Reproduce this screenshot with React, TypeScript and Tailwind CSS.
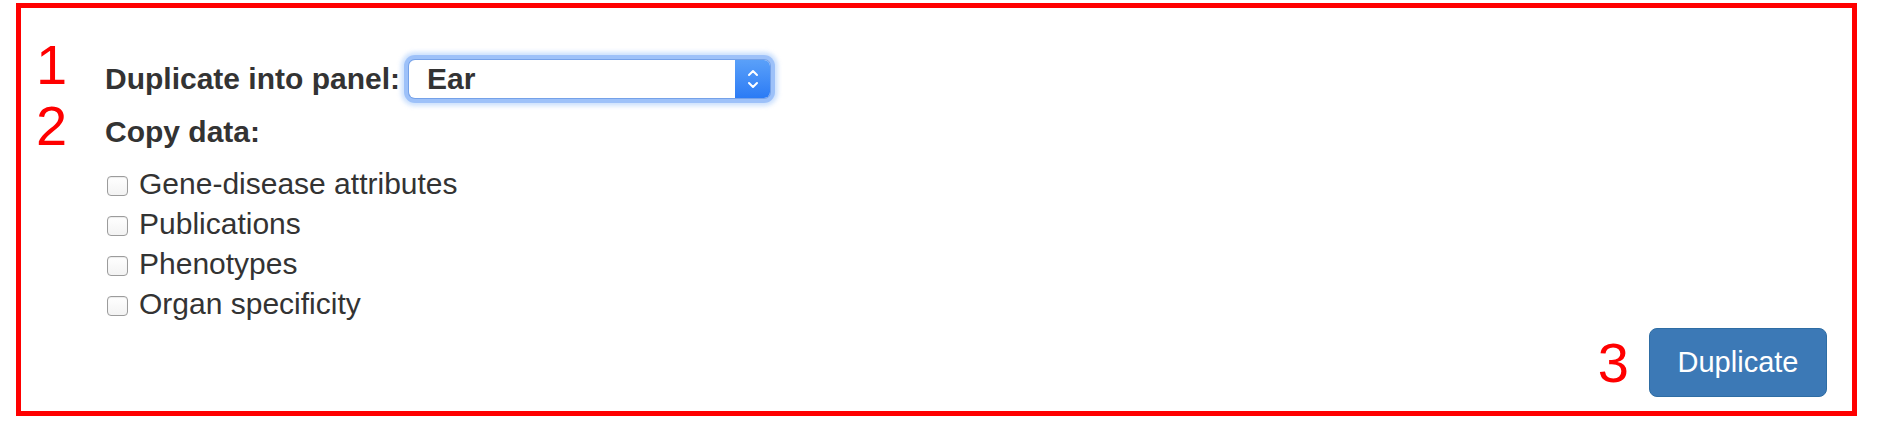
import React from "react";

const items = [
  "Gene-disease attributes",
  "Publications",
  "Phenotypes",
  "Organ specificity",
];

function Checkbox() {
  return (
    <span className="mt-[4px] inline-block w-[21px] h-[20px] shrink-0 rounded-[4px] border border-[#9c9c9c] bg-gradient-to-b from-white to-[#f3f3f3] shadow-[inset_0_1px_1px_rgba(0,0,0,0.08)]" />
  );
}

export default function App() {
  return (
    <div className="w-[1893px] h-[431px] bg-white pt-[3px] pl-[16px] font-['Liberation_Sans',Arial,sans-serif] text-[#333333]">
      <div className="relative w-[1841px] h-[413px] border-[5px] border-[#ff0000] flex flex-col pl-[84px] pr-[25px] pt-[52px]">
        <span className="absolute left-[15px] top-[29px] text-[56px] leading-[56px] text-[#ff0000]">1</span>
        <span className="absolute left-[15px] top-[90px] text-[56px] leading-[56px] text-[#ff0000]">2</span>

        <div className="flex items-center h-[38px]">
          <span className="text-[30px] leading-[30px] font-bold">Duplicate into panel:</span>
          <div className="ml-[9px] relative w-[361px] h-[38px] rounded-[6px] bg-white flex items-center shadow-[0_0_0_1px_rgba(90,140,220,0.6),0_0_0_5px_rgba(125,172,246,0.6),0_0_4px_8px_rgba(145,188,250,0.45)]">
            <span className="pl-[18px] text-[30px] leading-[30px] font-bold flex-1">Ear</span>
            <div className="w-[35px] h-full rounded-r-[6px] bg-gradient-to-b from-[#5aa0f9] to-[#2b7bf5] flex items-center justify-center">
              <svg width="14" height="24" viewBox="0 0 14 24" fill="none" stroke="white" strokeWidth="2" strokeLinecap="round" strokeLinejoin="round">
                <path d="M3 8 L7 4 L11 8" />
                <path d="M3 16 L7 20 L11 16" />
              </svg>
            </div>
          </div>
        </div>

        <div className="mt-[19px] text-[30px] leading-[30px] font-bold">Copy data:</div>

        <div className="mt-[17px] flex flex-col">
          {items.map((t) => (
            <div key={t} className="h-[40px] flex items-center pl-[2px]">
              <Checkbox />
              <span className="ml-[11px] text-[30px] leading-[40px]">{t}</span>
            </div>
          ))}
        </div>

        <div className="mt-[4px] flex justify-end items-center">
          <span className="text-[56px] leading-[56px] text-[#ff0000]">3</span>
          <button className="ml-[20px] w-[178px] h-[69px] rounded-[8px] bg-[#3c79b6] border border-[#2e6da4] text-white text-[29px] leading-[29px] flex items-center justify-center">
            Duplicate
          </button>
        </div>
      </div>
    </div>
  );
}
